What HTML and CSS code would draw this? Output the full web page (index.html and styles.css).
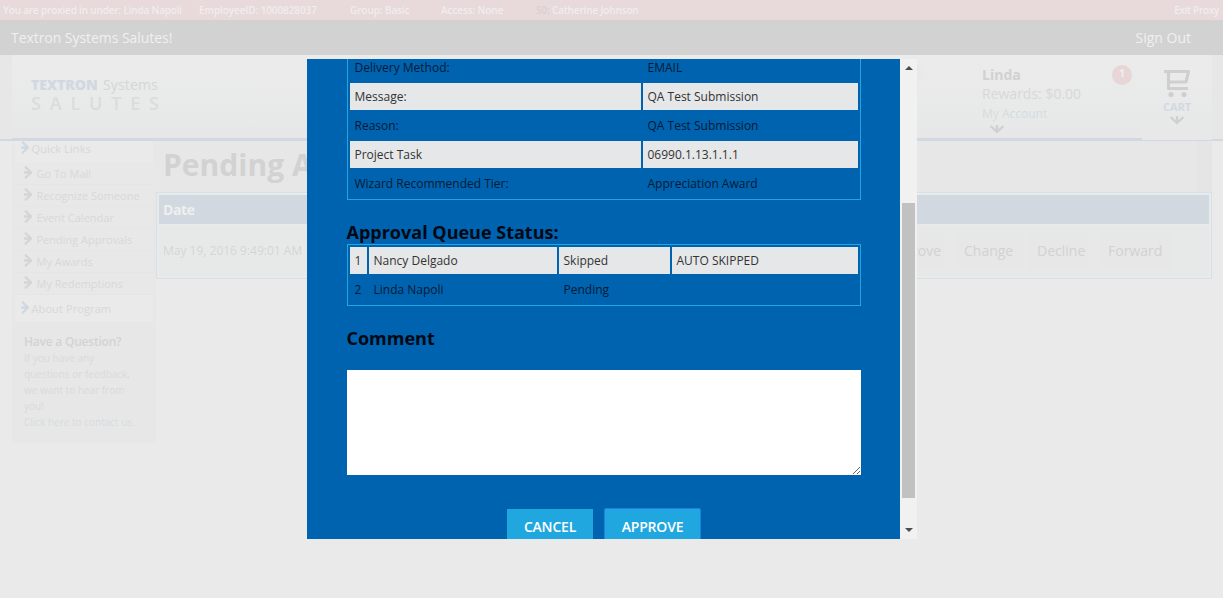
FILE: index.html
```html
<!DOCTYPE html>
<html lang="en">
<head>
<meta charset="utf-8">
<title>Textron Systems Salutes!</title>
<link rel="stylesheet" href="styles.css">
</head>
<body>
<div class="proxy"><span class="p1">You are proxied in under: Linda Napoli</span><span class="p2">EmployeeID: 1000828037</span><span class="p3">Group: Basic</span><span class="p4">Access: None</span><span class="p5"><i>S0:</i> Catherine Johnson</span><span class="exit">Exit Proxy</span></div>
<div class="topbar"><span class="site">Textron Systems Salutes!</span><span class="signout">Sign Out</span></div>
<header class="header">
  <div class="header-in">
    <div class="brand">
      <div class="b1"><b>TEXTRON</b><span>Systems</span></div>
      <div class="b2"><span>S</span><span>A</span><span>L</span><span>U</span><span>T</span><span>E</span><span>S</span></div>
    </div>
    <div class="avatar"></div>
    <div class="account">
      <b class="name">Linda</b>
      <span class="rewards">Rewards: $0.00</span>
      <span class="my">My Account</span>
      <svg class="down" width="14" height="9" viewBox="0 0 14 9"><path d="M.7 1L7 7L13.300 1M7 0V7"/></svg>
    </div>
    <div class="badge">1</div>
    <div class="cart">
      <svg class="cart-icon" width="28" height="28" viewBox="0 0 28 28"><path d="M1 2.500H25.500L23 13H6M5.500 2.500V19.500H25"/><circle cx="8" cy="25.500" r="2.600"/><circle cx="21" cy="25.500" r="2.600"/></svg>
      <b>CART</b>
      <svg class="down" width="14" height="9" viewBox="0 0 14 9"><path d="M.7 1L7 7L13.300 1M7 0V7"/></svg>
    </div>
  </div>
</header>
<div class="page">
  <aside class="side">
    <nav>
      <div class="main-link first"><svg class="arr" width="8" height="13" viewBox="0 0 8 13"><path d="M1 .7L7 6.500L1 12.300M0 6.500H6"/></svg><span>Quick Links</span></div>
      <div class="link"><svg class="arr" width="8" height="13" viewBox="0 0 8 13"><path d="M1 .7L7 6.500L1 12.300M0 6.500H6"/></svg><span>Go To Mall</span></div>
      <div class="link"><svg class="arr" width="8" height="13" viewBox="0 0 8 13"><path d="M1 .7L7 6.500L1 12.300M0 6.500H6"/></svg><span>Recognize Someone</span></div>
      <div class="link"><svg class="arr" width="8" height="13" viewBox="0 0 8 13"><path d="M1 .7L7 6.500L1 12.300M0 6.500H6"/></svg><span>Event Calendar</span></div>
      <div class="link"><svg class="arr" width="8" height="13" viewBox="0 0 8 13"><path d="M1 .7L7 6.500L1 12.300M0 6.500H6"/></svg><span>Pending Approvals</span></div>
      <div class="link"><svg class="arr" width="8" height="13" viewBox="0 0 8 13"><path d="M1 .7L7 6.500L1 12.300M0 6.500H6"/></svg><span>My Awards</span></div>
      <div class="link"><svg class="arr" width="8" height="13" viewBox="0 0 8 13"><path d="M1 .7L7 6.500L1 12.300M0 6.500H6"/></svg><span>My Redemptions</span></div>
      <div class="main-link about"><svg class="arr" width="8" height="13" viewBox="0 0 8 13"><path d="M1 .7L7 6.500L1 12.300M0 6.500H6"/></svg><span>About Program</span></div>
    </nav>
    <section class="question">
      <h4>Have a Question?</h4>
      <p>If you have any<br>questions or feedback,<br>we want to hear from<br>you!<br><a>Click here to contact us.</a></p>
    </section>
  </aside>
  <main class="content">
    <h1>Pending Approvals</h1>
    <div class="list">
      <div class="list-head">Date</div>
      <div class="list-row">
        <span class="date">May 19, 2016 9:49:01 AM</span>
        <div class="actions"><span class="act a1">Approve</span><span class="act a2">Change</span><span class="act a3">Decline</span><span class="act a4">Forward</span></div>
      </div>
    </div>
  </main>
</div>
<div class="modal">
  <div class="dialog">
    <div class="grid details">
      <div class="cell">Delivery Method:</div><div class="cell">EMAIL</div>
      <div class="cell lit">Message:</div><div class="cell lit">QA Test Submission</div>
      <div class="cell">Reason:</div><div class="cell">QA Test Submission</div>
      <div class="cell lit">Project Task</div><div class="cell lit">06990.1.13.1.1.1</div>
      <div class="cell">Wizard Recommended Tier:</div><div class="cell">Appreciation Award</div>
    </div>
    <h2 class="h-queue">Approval Queue Status:</h2>
    <div class="grid queue">
      <div class="cell lit">1</div><div class="cell lit">Nancy Delgado</div><div class="cell lit">Skipped</div><div class="cell lit">AUTO SKIPPED</div>
      <div class="cell">2</div><div class="cell">Linda Napoli</div><div class="cell">Pending</div><div class="cell"></div>
    </div>
    <h2 class="h-comment">Comment</h2>
    <textarea class="comment" aria-label="Comment"></textarea>
    <div class="buttons"><button class="btn cancel">CANCEL</button><button class="btn approve">APPROVE</button></div>
  </div>
  <div class="scroll">
    <svg width="8" height="4" viewBox="0 0 8 4"><path d="M4 0L8 4H0Z"/></svg>
    <div class="thumb"></div>
    <svg class="end" width="8" height="4" viewBox="0 0 8 4"><path d="M4 4L8 0H0Z"/></svg>
  </div>
</div>
</body>
</html>
```
FILE: styles.css
```css
* { box-sizing: border-box; }
body { margin: 0; height: 598px; overflow: hidden; background: #eaeaea; font-family: "Open Sans", "Noto Sans", sans-serif; color: #d5d5d5; white-space: nowrap; }
h1, h2, h4, p { margin: 0; }
svg { display: block; flex: none; }

.proxy { height: 20px; display: flex; padding: 0 4px 0 3px; background: #e8dada; color: #f0eded; font-size: 10px; line-height: 21px; font-weight: 600; letter-spacing: -0.1px; }
.proxy i { font-style: normal; color: #d8cfcf; }
.p1 { width: 196px; letter-spacing: -0.18px; }
.p2 { width: 151px; }
.p3 { width: 91px; }
.p4 { width: 95px; }
.p5 { letter-spacing: -0.15px; }
.exit { margin-left: auto; letter-spacing: -0.3px; }
.topbar { height: 35px; display: flex; justify-content: space-between; padding: 0 32px 0 11px; background: #d2d2d2; color: #f0f0f0; font-size: 14px; line-height: 35px; }
.site { letter-spacing: -0.05px; }

.header { height: 86px; padding: 0 11px 0 12px; background: linear-gradient(#d0d9e1, #d0d9e1) 0 84px / 100% 2px no-repeat #e7e7e7; }
.header-in { display: flex; height: 86px; border-bottom: 3px solid #d0d9e1; background: linear-gradient(#ebebeb, #e7e9e8 71px, #e7e7e7 72px); }
.brand { width: 869px; padding: 21px 0 0 19px; }
.b1 { display: flex; gap: 5px; font-size: 14px; line-height: 18px; color: #d4d6d6; }
.b1 b { width: 67px; font-weight: 800; color: #d0d9e1; }
.b1 span { letter-spacing: .15px; }
.b2 { display: flex; justify-content: space-between; width: 128px; font-size: 18px; font-weight: 600; line-height: 19px; color: #dbdcdc; }
.avatar { width: 42px; height: 26px; margin-top: 7px; border-radius: 0 13px 13px 0; background: #e9e9e9; }
.account { display: flex; flex-direction: column; flex: 0 0 130px; margin-left: 59px; padding-top: 9px; }
.name { font-size: 14px; line-height: 22px; color: #d1d1d1; }
.rewards { font-size: 14px; line-height: 16px; color: #d8d8d8; }
.my { font-size: 12px; line-height: 23px; color: #d5dbe0; }
.down { fill: none; stroke: #cfd0d0; stroke-width: 2.3; }
.account .down { margin-left: 8px; }
.badge { width: 20px; height: 20px; margin-top: 10px; border-radius: 50%; background: #e8d6d6; color: #efefef; font-size: 10.5px; font-weight: 700; line-height: 17px; text-align: center; }
.cart { display: flex; flex-direction: column; align-items: center; width: 70px; height: 85px; margin-left: auto; padding-top: 14px; background: linear-gradient(#ebebeb, #e7e9e8 71px, #e8e8e8 72px); }
.cart-icon { fill: #cfcfcf; }
.cart-icon path { fill: none; stroke: #cfcfcf; stroke-width: 3.2; stroke-linejoin: round; }
.cart b { font-size: 11px; line-height: 19px; color: #d0d9e1; }

.page { display: flex; align-items: flex-start; padding: 0 11px 0 12px; }
.side { width: 144px; height: 302px; padding: 0 3px; background: #e7e7e7; }
.main-link, .link { display: flex; font-size: 11px; color: #d7d8d8; background: #eaeaea; }
.first { height: 22px; padding-left: 6px; line-height: 16px; }
.link { height: 22px; padding-left: 9px; line-height: 22px; background: #e8e8e8; border-bottom: 1px solid #e5e5e5; }
.about { height: 27px; padding-left: 6px; line-height: 28px; }
.arr { fill: none; stroke: #d4d5d5; stroke-width: 2.3; margin-top: 3px; }
.main-link .arr { stroke: #d0d9e1; margin-top: 0; }
.about .arr { margin-top: 6px; }
.arr + span { margin-left: 4.5px; }
.main-link .arr + span { margin-left: 2.5px; }
.main-link span { letter-spacing: .1px; }
.question { padding: 12px 0 0 9px; }
.question h4 { font-size: 12px; line-height: 16px; font-weight: 600; letter-spacing: -0.22px; color: #d3d3d3; }
.question p { font-size: 10px; line-height: 16px; color: #d9dada; }
.question a { color: #d6dce0; }

.content { flex: 1; }
.content h1 { height: 51px; padding-left: 7px; font-size: 30px; line-height: 47px; color: #d2d2d2; background: linear-gradient(90deg, #e7e7e7 98.600%, #e5e5e5 98.600%); }
.list { border: 1px solid #d3e1e8; padding: 2px; background: #eaeaea; }
.list-head { height: 29px; padding-left: 4px; background: #d1d8e0; color: #efefef; font-size: 14px; font-weight: 700; line-height: 30px; letter-spacing: -0.4px; }
.list-row { display: flex; height: 50px; margin-top: 2px; padding-left: 4px; background: #e7e9e8; }
.date { flex: 0 0 728px; font-size: 12px; line-height: 50px; }
.actions { display: flex; gap: 3px; padding: 6px 0; }
.act { flex: none; height: 38px; padding-left: 10px; background: #e7e7e7; color: #d2d2d2; font-size: 14px; line-height: 38px; }
.a1 { width: 60px; padding: 0 10px 0 0; display: flex; justify-content: flex-end; }
.a2 { width: 70px; }
.a3 { width: 68px; }
.a4 { width: 75px; }

.modal { position: absolute; left: 307px; top: 59px; width: 610px; height: 480px; display: flex; overflow: hidden; }
.dialog { width: 593px; padding: 0 39px 0 40px; background: #0063af; color: #000; }
.grid { display: grid; gap: 2px; padding: 2px; border: 1px solid #21a7e0; font-size: 12px; grid-auto-rows: 27px; }
.details { grid-template-columns: 291px 215px; margin-top: -8px; }
.queue { grid-template-columns: 17px 188px 111px 186px; }
.cell { padding-left: 4.5px; line-height: 28px; color: #041a35; }
.lit { background: #e6e7e9; color: #333; }
.dialog h2 { margin-left: -0.5px; font-size: 18px; line-height: 24px; color: #000814; }
.h-queue { margin-top: 20px; }
.h-comment { padding-top: 20px; height: 64px; }
.comment { display: block; width: 514px; height: 105px; border: 0; padding: 0; background: #fff; }
.buttons { display: flex; align-items: flex-start; gap: 11px; padding: 33px 0 0 160px; }
.btn { height: 38px; border: 0; padding: 0; background: #21a7e0; color: #fff; font: 600 14px/36px "Open Sans", sans-serif; letter-spacing: -0.2px; }
.cancel { width: 86px; height: 36px; margin-top: 1px; }
.approve { width: 97px; border: 1px solid #2380df; border-radius: 2px; }
.scroll { display: flex; flex-direction: column; align-items: center; width: 17px; padding: 7px 0; background: #f1f1f1; fill: #4c4c4c; }
.thumb { width: 13px; height: 295px; margin-top: 133px; background: #c1c1c1; }
.end { margin-top: auto; }
```
